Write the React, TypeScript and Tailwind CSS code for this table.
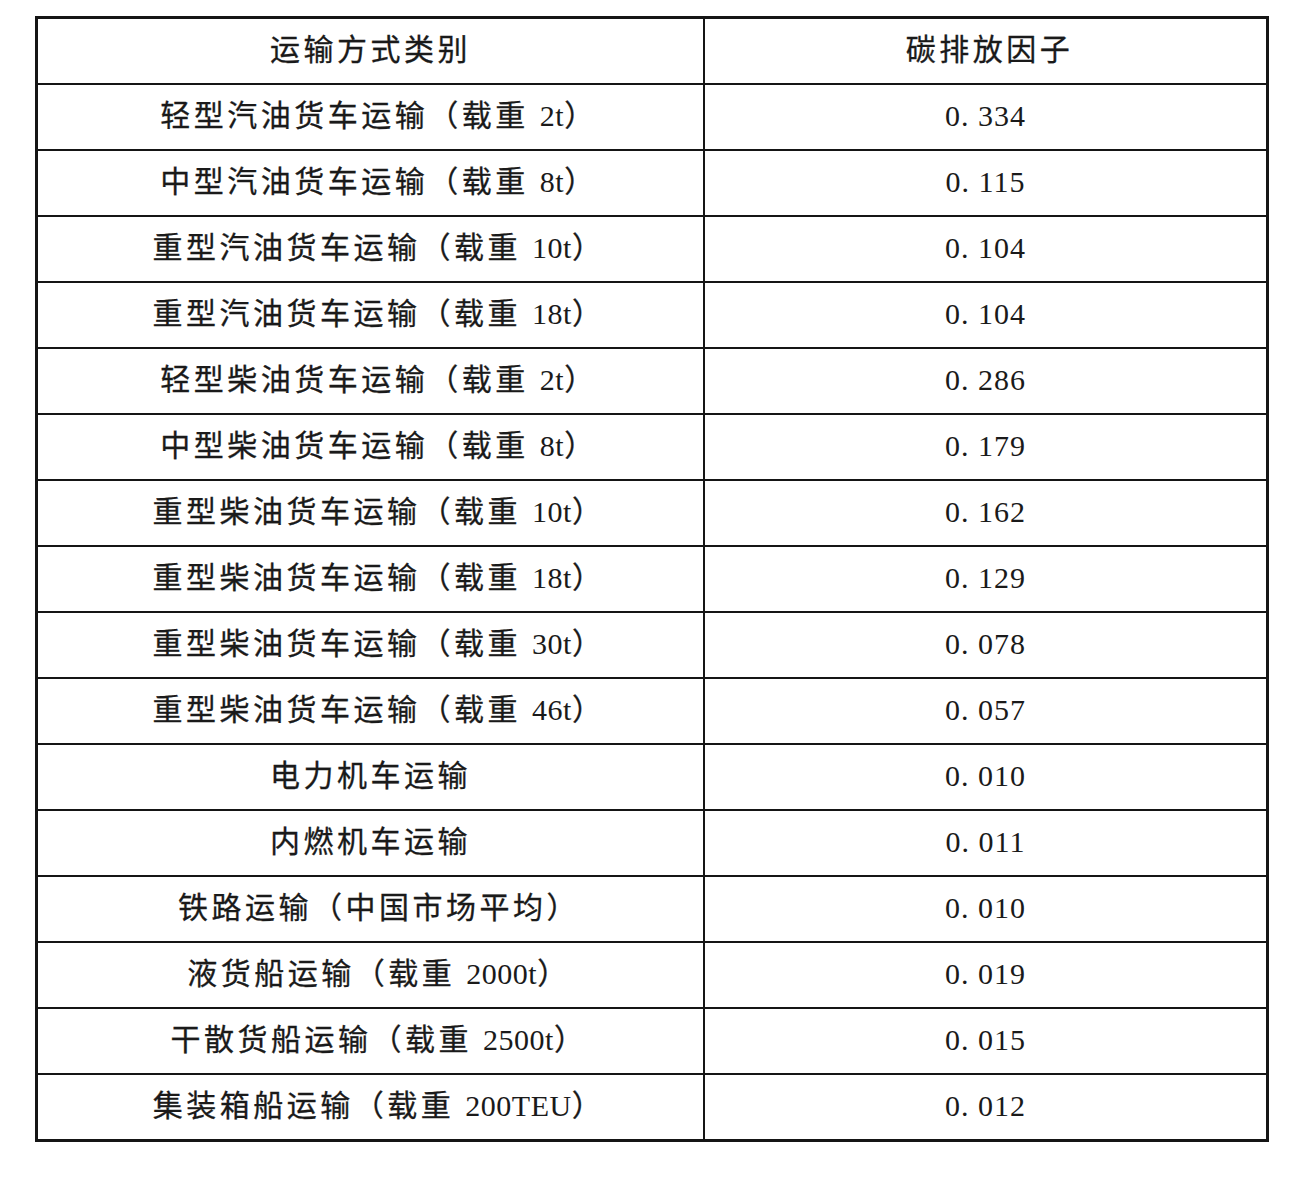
const rows: [string, string][] = [
  ['轻型汽油货车运输（载重 2t）', '0. 334'],
  ['中型汽油货车运输（载重 8t）', '0. 115'],
  ['重型汽油货车运输（载重 10t）', '0. 104'],
  ['重型汽油货车运输（载重 18t）', '0. 104'],
  ['轻型柴油货车运输（载重 2t）', '0. 286'],
  ['中型柴油货车运输（载重 8t）', '0. 179'],
  ['重型柴油货车运输（载重 10t）', '0. 162'],
  ['重型柴油货车运输（载重 18t）', '0. 129'],
  ['重型柴油货车运输（载重 30t）', '0. 078'],
  ['重型柴油货车运输（载重 46t）', '0. 057'],
  ['电力机车运输', '0. 010'],
  ['内燃机车运输', '0. 011'],
  ['铁路运输（中国市场平均）', '0. 010'],
  ['液货船运输（载重 2000t）', '0. 019'],
  ['干散货船运输（载重 2500t）', '0. 015'],
  ['集装箱船运输（载重 200TEU）', '0. 012'],
]

const font = { fontFamily: '"Liberation Serif", "Noto Sans CJK SC", serif' }

// latin runs get normal spacing, CJK keeps the wide tracking
function Label({ text }: { text: string }) {
  const closing = text.endsWith('）')
  const body = closing ? text.slice(0, -1) : text
  const parts = body.split(/([A-Za-z0-9]+)/)
  return (
    <span className="whitespace-nowrap">
      {parts.map((p, i) =>
        /^[A-Za-z0-9]+$/.test(p) ? (
          <span key={i} className="tracking-[0.5px] [-webkit-text-stroke:0px]">{p}</span>
        ) : (
          <span key={i}>{p}</span>
        )
      )}
      {closing && <span className="inline-block mr-[-17px]">）</span>}
    </span>
  )
}

export default function App() {
  return (
    <div className="min-h-[1189px] w-[1302px] bg-white pt-[16px] pl-[35px]" style={font}>
      <div className="w-[1234px] border-[3px] border-[#151515] text-[30px] tracking-[3.5px] text-[#1a1a1a] [-webkit-text-stroke:0.3px_#1a1a1a]">
        <div className="flex h-[64px]">
          <div className="flex w-[667px] items-center justify-center border-r-2 border-[#151515] pb-[4px]">运输方式类别</div>
          <div className="flex flex-1 items-center justify-center pl-[8px] pb-[4px]">碳排放因子</div>
        </div>
        {rows.map(([name, val]) => (
          <div key={name + val} className="flex h-[66px] border-t-2 border-[#151515]">
            <div className="flex w-[667px] items-center justify-center border-r-2 border-[#151515] pb-[4px]">
              <Label text={name} />
            </div>
            <div className="flex flex-1 items-center justify-center whitespace-pre tracking-[1px] pb-[4px] [-webkit-text-stroke:0px]">{val}</div>
          </div>
        ))}
      </div>
    </div>
  )
}
